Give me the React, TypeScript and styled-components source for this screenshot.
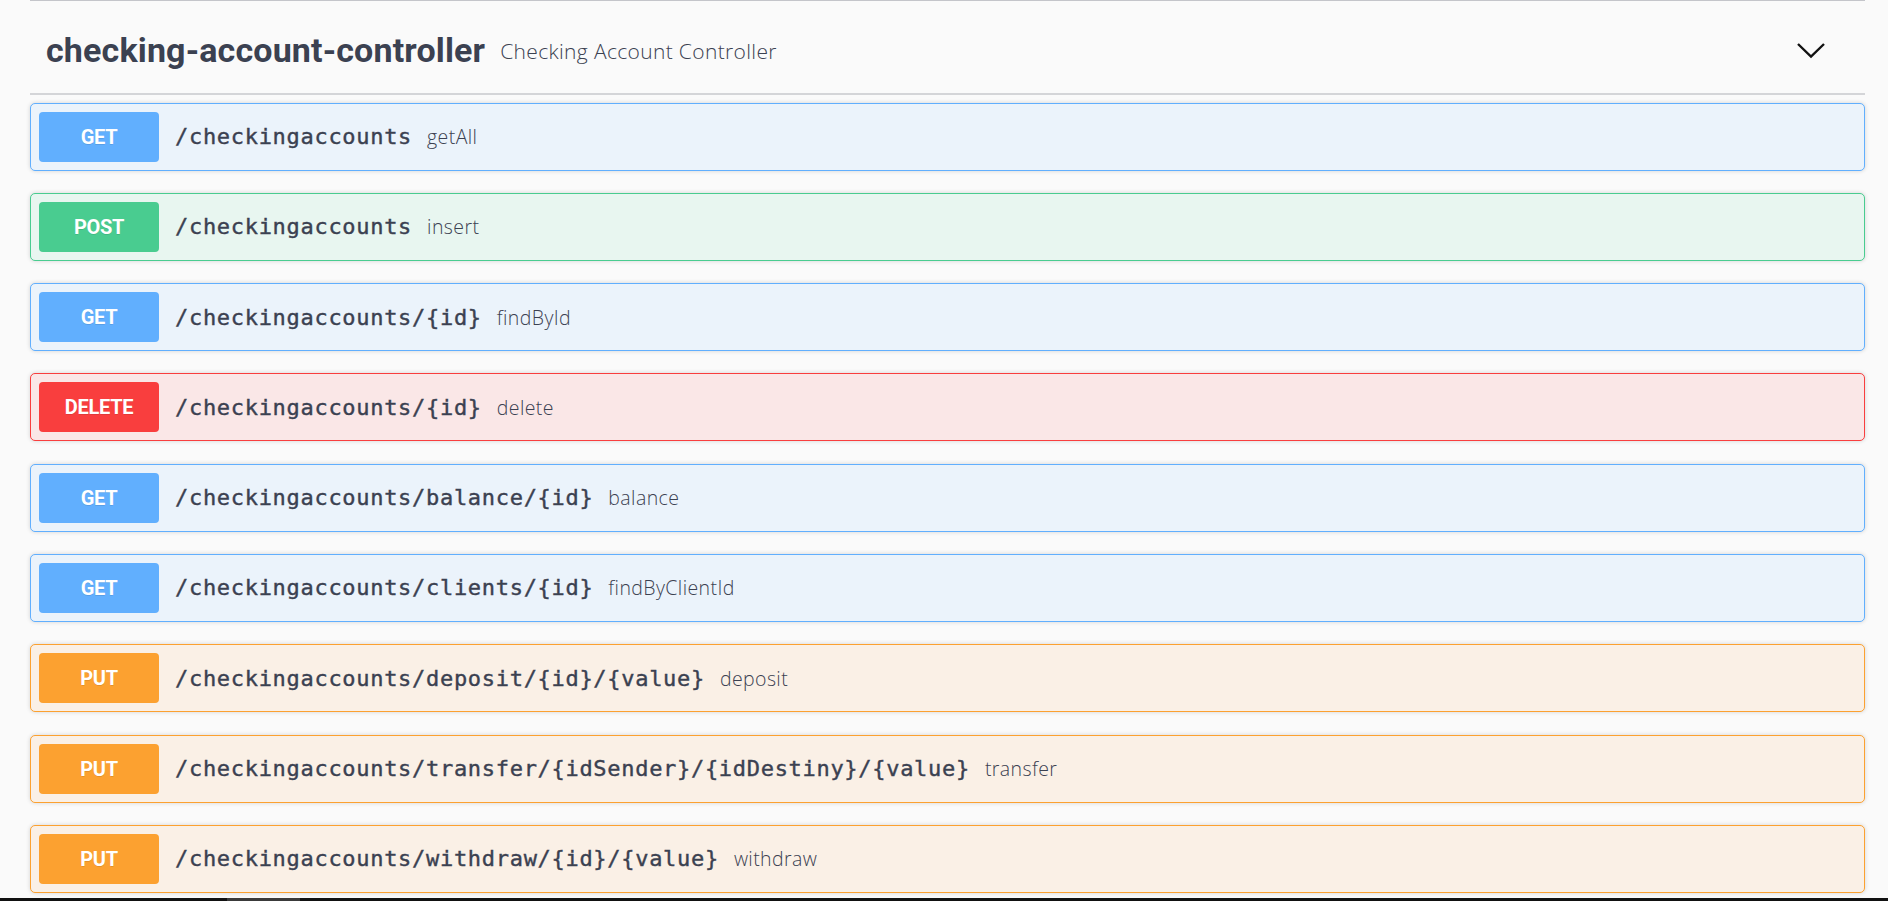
import * as React from 'react';
import styled, { createGlobalStyle } from 'styled-components';

type Method = 'GET' | 'POST' | 'DELETE' | 'PUT';

type Operation = {
    method: Method,
    path: string,
    summary: string,
}

const methodColors: { [key in Method]: { main: string, tint: string } } = {
    GET: { main: '#61affe', tint: '#ebf3fb' },
    POST: { main: '#49cc90', tint: '#e8f6f0' },
    DELETE: { main: '#f93e3e', tint: '#fae7e7' },
    PUT: { main: '#fca130', tint: '#faf0e6' },
};

const operations: Array<Operation> = [
    { method: 'GET', path: '/checkingaccounts', summary: 'getAll' },
    { method: 'POST', path: '/checkingaccounts', summary: 'insert' },
    { method: 'GET', path: '/checkingaccounts/{id}', summary: 'findById' },
    { method: 'DELETE', path: '/checkingaccounts/{id}', summary: 'delete' },
    { method: 'GET', path: '/checkingaccounts/balance/{id}', summary: 'balance' },
    { method: 'GET', path: '/checkingaccounts/clients/{id}', summary: 'findByClientId' },
    { method: 'PUT', path: '/checkingaccounts/deposit/{id}/{value}', summary: 'deposit' },
    { method: 'PUT', path: '/checkingaccounts/transfer/{idSender}/{idDestiny}/{value}', summary: 'transfer' },
    { method: 'PUT', path: '/checkingaccounts/withdraw/{id}/{value}', summary: 'withdraw' },
];

const GlobalStyle = createGlobalStyle`
    html, body {
        margin: 0;
        padding: 0;
        background: #fafafa;
        color: #3b4151;
        font-family: 'Open Sans', sans-serif;
    }
`

const Page = styled.div`
    display: flex;
    flex-direction: column;
    height: 100vh;
    overflow: hidden;
`

const Content = styled.div`
    flex: 1;
    padding: 0 23px 0 30px;
    overflow: hidden;
`

const TagHeader = styled.div`
    display: flex;
    align-items: center;
    height: 87px;
    padding: 5px 0 0 16px;
    border-top: 1px solid rgba(59, 65, 81, 0.28);
    border-bottom: 2px solid rgba(59, 65, 81, 0.2);
    margin-bottom: 7.5px;
`

const TagTitle = styled.h4`
    margin: 0;
    font-family: Roboto, 'Liberation Sans', sans-serif;
    font-weight: 700;
    font-size: 34px;
    letter-spacing: 0.15px;
    color: #3b4151;
`

const TagDescription = styled.small`
    font-family: 'Open Sans', sans-serif;
    font-size: 21px;
    font-weight: 300;
    letter-spacing: 0.35px;
    color: #3b4151;
    padding: 0 15px 0 15px;
    margin-top: 2px;
`

const ExpandButton = styled.button`
    margin-left: auto;
    margin-right: 38px;
    padding: 0;
    border: none;
    background: transparent;
    width: 32px;
    height: 32px;
    display: flex;
    align-items: center;
    justify-content: center;
`

const OpList = styled.div`
    display: flex;
    flex-direction: column;
`

const OpRow = styled.div<{ $method: Method }>`
    display: flex;
    align-items: center;
    padding: 8px;
    margin-bottom: 22.3px;
    border: 1px solid ${(p) => methodColors[p.$method].main};
    background: ${(p) => methodColors[p.$method].tint};
    border-radius: 5px;
    box-shadow: 0 0 4px rgba(0, 0, 0, 0.16);
`

const MethodBadge = styled.span<{ $method: Method }>`
    display: flex;
    align-items: center;
    justify-content: center;
    width: 120px;
    height: 50px;
    flex: 0 0 120px;
    border-radius: 4px;
    background: ${(p) => methodColors[p.$method].main};
    color: #ffffff;
    font-family: Roboto, 'Liberation Sans', sans-serif;
    font-weight: 700;
    font-size: 20px;
    letter-spacing: -0.3px;
    text-shadow: 0 1px 0 rgba(0, 0, 0, 0.1);
`

const OpPath = styled.span`
    font-family: 'DejaVu Sans Mono', 'Liberation Mono', monospace;
    font-weight: 400;
    font-size: 22px;
    letter-spacing: 0.7px;
    color: #3b4151;
    -webkit-text-stroke: 0.4px #3b4151;
    padding: 0 15px 0 16px;
`

const OpSummary = styled.span`
    font-family: 'Open Sans', sans-serif;
    font-size: 19.5px;
    font-weight: 300;
    letter-spacing: 0.4px;
    color: #3b4151;
`

const BottomStrip = styled.div`
    flex: 0 0 3px;
    background: #111111;
`

const StripThumb = styled.div`
    margin-left: 227px;
    width: 73px;
    height: 100%;
    background: #3a3a3a;
`

function Chevron() {
    return (
        <svg width="30" height="18" viewBox="0 0 30 18">
            <polyline points="2,3 15,15.5 28,3" fill="none" stroke="#111" strokeWidth="2.4" />
        </svg>
    );
}

export default function App() {
    return (
        <Page>
            <GlobalStyle />
            <Content>
                <TagHeader>
                    <TagTitle>checking-account-controller</TagTitle>
                    <TagDescription>Checking Account Controller</TagDescription>
                    <ExpandButton aria-label="collapse">
                        <Chevron />
                    </ExpandButton>
                </TagHeader>
                <OpList>
                    {operations.map((op, idx) => (
                        <OpRow key={idx} $method={op.method}>
                            <MethodBadge $method={op.method}>{op.method}</MethodBadge>
                            <OpPath>{op.path}</OpPath>
                            <OpSummary>{op.summary}</OpSummary>
                        </OpRow>
                    ))}
                </OpList>
            </Content>
            <BottomStrip>
                <StripThumb />
            </BottomStrip>
        </Page>
    );
}
